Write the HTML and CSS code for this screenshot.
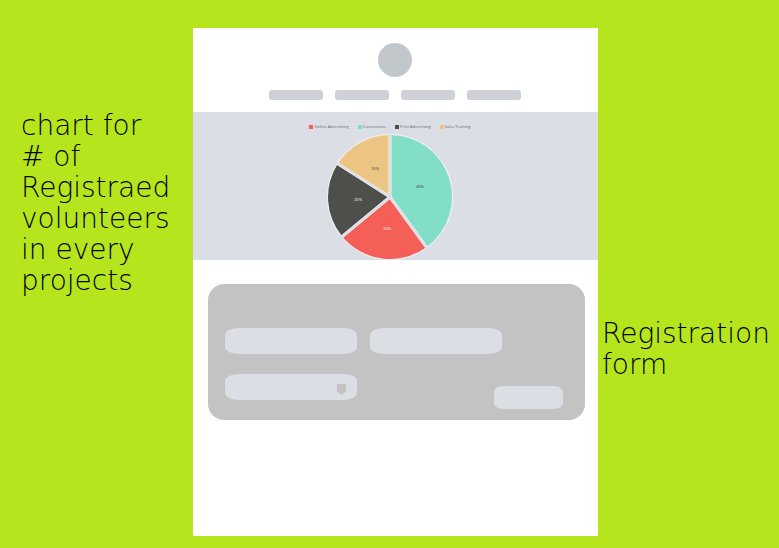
FILE: index.html
```html
<!DOCTYPE html>
<html lang="en">
<head>
<meta charset="utf-8">
<meta name="viewport" content="width=device-width, initial-scale=1">
<title>Volunteers wireframe</title>
<link rel="stylesheet" href="styles.css">
</head>
<body>
<div class="board">
  <p class="note note-chart">chart for<br># of<br>Registraed<br>volunteers<br>in every<br>projects</p>
  <main class="page">
    <header class="header">
      <div class="logo"></div>
      <nav class="nav">
        <a class="nav-link" href="#chart" aria-label="Chart"></a>
        <a class="nav-link" href="#chart" aria-label="Projects"></a>
        <a class="nav-link" href="#form" aria-label="Volunteers"></a>
        <a class="nav-link" href="#form" aria-label="Register"></a>
      </nav>
    </header>
    <section class="chart" id="chart">
      <ul class="legend">
        <li class="key key-red">Online Advertising</li>
        <li class="key key-mint">Conventions</li>
        <li class="key key-dark">Print Advertising</li>
        <li class="key key-sand">Sales Training</li>
      </ul>
      <svg class="pie" viewBox="-63 -63 126 126" role="img" aria-label="Volunteers by project">
        <circle class="rim" r="62"/>
        <path class="mint" d="M0 0V-62A62 62 0 0 1 36.4 50.2Z"/>
        <path class="red" d="M0 0L36.4 50.2A62 62 0 0 1 -47.8 39.5Z"/>
        <path class="dark" d="M0 0L-47.8 39.5A62 62 0 0 1 -52.3 -33.2Z"/>
        <path class="sand" d="M0 0L-52.3 -33.2A62 62 0 0 1 0 -62Z"/>
        <path class="edge" d="M0 0V-62M0 0L36.4 50.2M0 0L-47.8 39.5M0 0L-52.3 -33.2"/>
        <path class="gap" d="M0 0V-63M0 0L37 51M0 0L-48.5 40.1M0 0L-53.2 -33.8"/>
        <text class="value" x="30" y="-9">40%</text>
        <text class="value light" x="-3" y="33">24%</text>
        <text class="value light" x="-32" y="4">20%</text>
        <text class="value" x="-15" y="-27">16%</text>
      </svg>
    </section>
    <form class="form" id="form">
      <input class="field" type="text" aria-label="First name">
      <input class="field" type="text" aria-label="Last name">
      <div class="picker">
        <select class="field" aria-label="Project"><option></option></select>
        <svg class="arrow" viewBox="0 0 11 11" aria-hidden="true"><path d="M1 0H10V7H11L8 9L5.5 11L3 9L0 7H1Z"/></svg>
      </div>
      <button class="submit" type="submit" aria-label="Submit"></button>
    </form>
  </main>
  <p class="note note-form">Registration<br>form</p>
</div>
</body>
</html>
```
FILE: styles.css
```css
* {
  box-sizing: border-box;
}

body {
  margin: 0;
  background: #b5e61d;
  color: #000;
  font-family: "DejaVu Sans", sans-serif;
}

.board {
  display: grid;
  grid-template-columns: 193fr 405fr 181fr;
  min-height: 100vh;
  padding: 28px 0 12px;
}

.note {
  margin: 0;
  font-size: 28px;
  font-weight: 200;
  line-height: 31px;
}

.note-chart {
  padding: 82px 0 0 21px;
}

.note-form {
  padding: 290px 0 0 4px;
}

.page {
  background: #fff;
}

.header {
  display: flex;
  flex-direction: column;
  align-items: center;
  gap: 13px;
  padding: 15px 2px 12px 0;
}

.logo {
  width: 34px;
  height: 34px;
  border-radius: 50%;
  background: #c2c7cb;
}

.nav {
  display: flex;
  gap: 12px;
}

.nav-link {
  width: 54px;
  height: 10px;
  border-radius: 3px;
  background: #ced1d6;
}

.chart {
  display: flex;
  flex-direction: column;
  align-items: center;
  gap: 4px;
  padding: 12px 11px 0 0;
  background: #dbdee5;
}

.legend {
  display: flex;
  gap: 9px;
  margin: 0;
  padding: 0;
  list-style: none;
  color: #666;
  font: 4px/6px "Open Sans", sans-serif;
}

.key {
  display: flex;
  align-items: center;
  gap: 1px;
}

.key::before {
  content: "";
  width: 4px;
  height: 4px;
  background: currentColor;
}

.key-red::before {
  background: #f45f58;
}

.key-mint::before {
  background: #82dec6;
}

.key-dark::before {
  background: #4e4e4b;
}

.key-sand::before {
  background: #ecc582;
}

.pie {
  display: block;
  width: 126px;
  height: 126px;
}

.rim {
  fill: none;
  stroke: #eef0f3;
  stroke-width: 2;
}

.mint {
  fill: #82dec6;
}

.red {
  fill: #f45f58;
}

.dark {
  fill: #4e4e4b;
}

.sand {
  fill: #ecc582;
}

.edge {
  stroke: #f4f5f7;
  stroke-width: 3;
}

.gap {
  stroke: #dbdee5;
  stroke-width: 2;
}

.value {
  fill: #333;
  font: 4px "Open Sans", sans-serif;
  text-anchor: middle;
}

.light {
  fill: #fff;
}

.form {
  display: grid;
  grid-template-columns: 132fr 132fr 48fr;
  column-gap: 13px;
  row-gap: 20px;
  margin: 24px 13px 0 15px;
  padding: 44px 22px 11px 17px;
  border-radius: 16px;
  background: #c3c3c3;
}

.field {
  display: block;
  width: 100%;
  height: 26px;
  padding: 0 12px;
  border: 0;
  border-radius: 14px / 7px;
  background: #dbdee5;
  appearance: none;
}

.picker {
  position: relative;
  grid-column: 1;
}

.arrow {
  position: absolute;
  top: 10px;
  right: 10px;
  width: 11px;
  height: 11px;
  fill: #c3c3c3;
  pointer-events: none;
}

.submit {
  grid-column: 2 / 4;
  justify-self: end;
  align-self: end;
  width: 69px;
  height: 23px;
  margin-top: 12px;
  border: 0;
  border-radius: 9px / 6px;
  background: #dbdee5;
}
```
